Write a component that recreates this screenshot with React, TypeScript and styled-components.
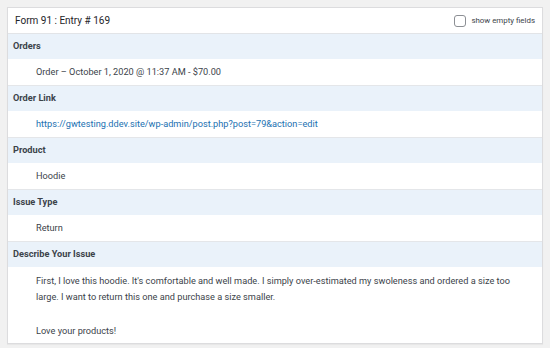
import styled, { createGlobalStyle } from "styled-components";

const GlobalStyle = createGlobalStyle`
  html, body {
    margin: 0;
    padding: 0;
    background: #f1f1f1;
  }
  body {
    font-family: Roboto, "Liberation Sans", Arial, sans-serif;
    color: #3c434a;
  }
`;

type Field = {
  label: string;
  value: string[];
  link?: boolean;
};

const fields: Field[] = [
  { label: "Orders", value: ["Order – October 1, 2020 @ 11:37 AM - $70.00"] },
  {
    label: "Order Link",
    value: ["https://gwtesting.ddev.site/wp-admin/post.php?post=79&action=edit"],
    link: true,
  },
  { label: "Product", value: ["Hoodie"] },
  { label: "Issue Type", value: ["Return"] },
  {
    label: "Describe Your Issue",
    value: [
      "First, I love this hoodie. It's comfortable and well made. I simply over-estimated my swoleness and ordered a size too large. I want to return this one and purchase a size smaller.",
      "",
      "Love your products!",
    ],
  },
];

export default function App() {
  return (
    <>
      <GlobalStyle />
      <Page>
        <Card>
          <Header>
            <Title>Form 91 : Entry # 169</Title>
            <EmptyToggle>
              <Check type="checkbox" />
              <span>show empty fields</span>
            </EmptyToggle>
          </Header>
          {fields.map((f) => (
            <div key={f.label}>
              <LabelRow>{f.label}</LabelRow>
              <ValueRow $multi={f.value.length > 1}>
                {f.link ? (
                  <Link href="#">{f.value[0]}</Link>
                ) : (
                  f.value.map((line, i) =>
                    line ? <Line key={i}>{line}</Line> : <Line key={i}>&nbsp;</Line>
                  )
                )}
              </ValueRow>
            </div>
          ))}
        </Card>
      </Page>
    </>
  );
}

const Page = styled.div`
  padding: 7px;
`;

const Card = styled.div`
  background: #fff;
  border: 1px solid #dcdcde;
  box-shadow: 0 1px 1px rgba(0, 0, 0, 0.04);
`;

const Header = styled.div`
  display: flex;
  align-items: center;
  justify-content: space-between;
  height: 25px;
  padding: 0 7px;
  border-bottom: 1px solid #e2e4e7;
`;

const Title = styled.div`
  font-size: 10px;
  color: #1d2327;
`;

const EmptyToggle = styled.label`
  display: flex;
  align-items: center;
  gap: 5px;
  font-size: 7.9px;
  color: #3c434a;
`;

const Check = styled.input`
  appearance: none;
  margin: 0;
  width: 12px;
  height: 12px;
  border: 1px solid #8c8f94;
  border-radius: 3px;
  background: #fff;
`;

const LabelRow = styled.div`
  background: #eaf2fa;
  padding: 4px 5px;
  line-height: 16.5px;
  font-size: 9.2px;
  font-weight: 700;
  color: #3c434a;
`;

const ValueRow = styled.div<{ $multi?: boolean }>`
  padding: ${(p) => (p.$multi ? "6px 18px 4px 28px" : "5px 28px")};
  line-height: ${(p) => (p.$multi ? "16.7px" : "16.5px")};
  font-size: 9.2px;
  color: #3c434a;
  border-bottom: ${(p) => (p.$multi ? "none" : "1px solid #e4e6e9")};
`;

const Line = styled.div``;

const Link = styled.a`
  color: #2271b1;
  text-decoration: none;
`;
